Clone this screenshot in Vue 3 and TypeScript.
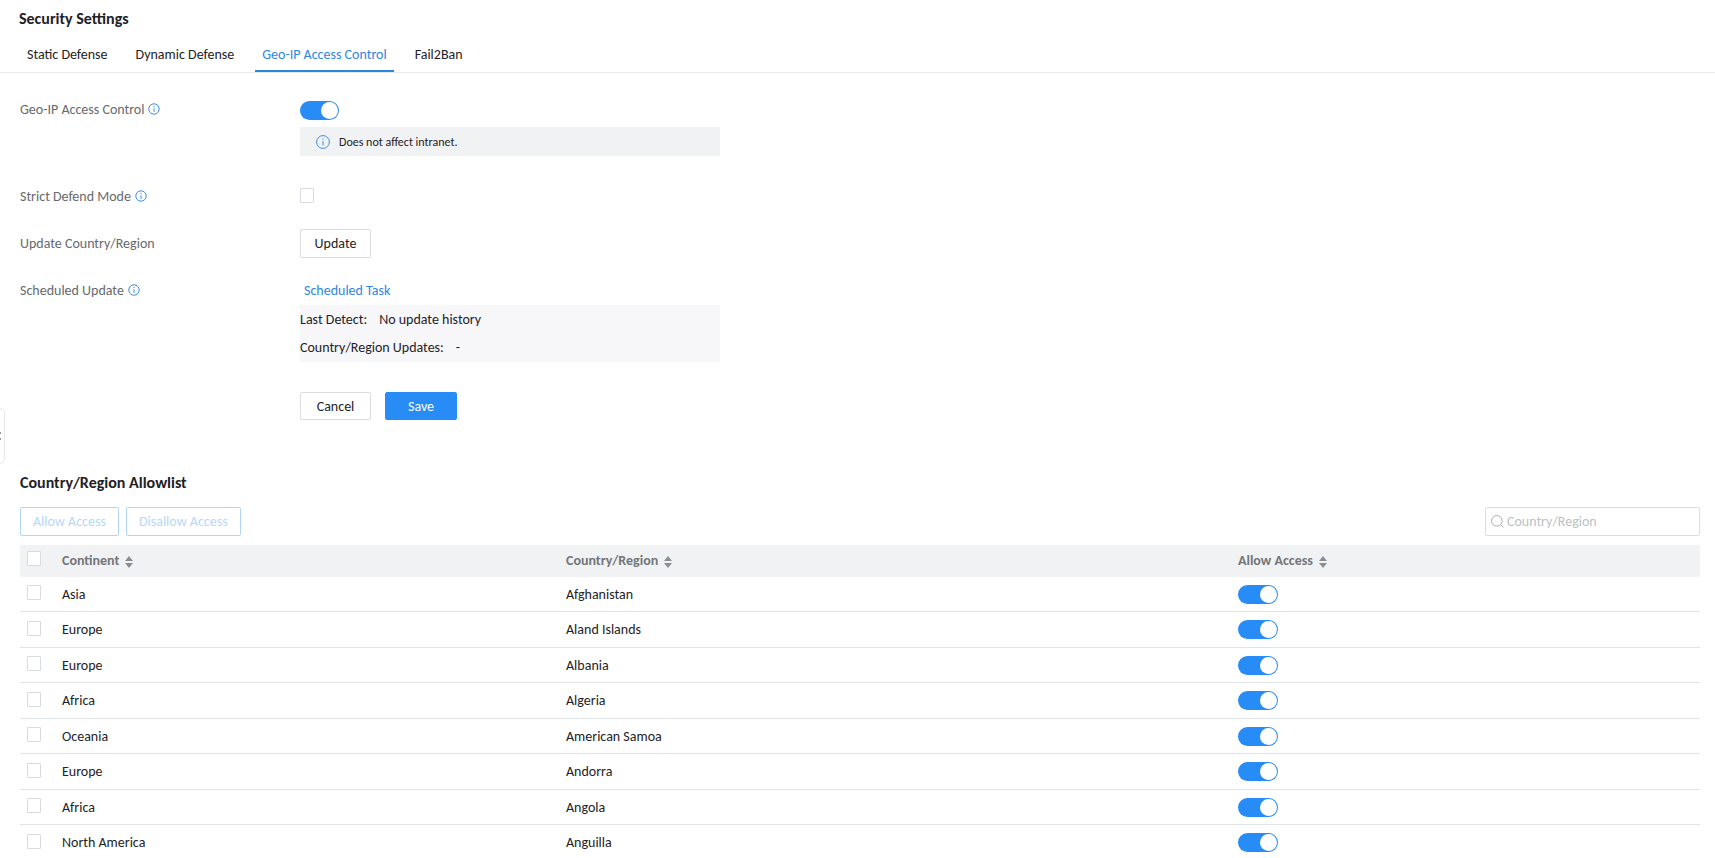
<script setup lang="ts">
import { computed, ref } from 'vue'

interface Region {
  continent: string
  name: string
  selected: boolean
  allowed: boolean
}

type SortKey = 'continent' | 'name' | 'allowed'

const tabs = ['Static Defense', 'Dynamic Defense', 'Geo-IP Access Control', 'Fail2Ban']
const activeTab = ref('Geo-IP Access Control')
const geoEnabled = ref(true)
const strictMode = ref(false)
const query = ref('')
const sortKey = ref<SortKey | null>(null)

const columns: { key: SortKey; label: string }[] = [
  { key: 'continent', label: 'Continent' },
  { key: 'name', label: 'Country/Region' },
  { key: 'allowed', label: 'Allow Access' },
]

const source: [string, string][] = [
  ['Asia', 'Afghanistan'],
  ['Europe', 'Aland Islands'],
  ['Europe', 'Albania'],
  ['Africa', 'Algeria'],
  ['Oceania', 'American Samoa'],
  ['Europe', 'Andorra'],
  ['Africa', 'Angola'],
  ['North America', 'Anguilla'],
]

const regions = ref<Region[]>(
  source.map(([continent, name]) => ({ continent, name, selected: false, allowed: true })),
)

const visible = computed(() => {
  const q = query.value.trim().toLowerCase()
  const list = regions.value.filter((r) => r.name.toLowerCase().includes(q))
  const key = sortKey.value
  return key ? [...list].sort((a, b) => String(a[key]).localeCompare(String(b[key]))) : list
})

const noneSelected = computed(() => !regions.value.some((r) => r.selected))
const allSelected = computed({
  get: () => regions.value.every((r) => r.selected),
  set: (on: boolean) => regions.value.forEach((r) => (r.selected = on)),
})

function setAccess(on: boolean) {
  regions.value.filter((r) => r.selected).forEach((r) => (r.allowed = on))
}
</script>

<template>
  <main class="page">
    <button class="drawer" type="button" aria-label="Expand sidebar">
      <svg class="drawer-icon" viewBox="0 0 8 10" aria-hidden="true"><path d="M6.5 1.5 3 5l3.5 3.5" /></svg>
    </button>

    <h1 class="title">Security Settings</h1>
    <nav class="tabs">
      <button
        v-for="tab in tabs"
        :key="tab"
        type="button"
        class="tab"
        :class="{ active: tab === activeTab }"
        @click="activeTab = tab"
      >{{ tab }}</button>
    </nav>

    <form class="form" @submit.prevent>
      <div class="row">
        <label class="label" for="geo">
          Geo-IP Access Control
          <svg class="info" viewBox="0 0 14 14" aria-hidden="true"><circle cx="7" cy="7" r="5.2" /><path d="M7 6.3v3.6M7 3.9v1.2" /></svg>
        </label>
        <div class="field">
          <input id="geo" v-model="geoEnabled" class="switch" type="checkbox" role="switch" />
          <p class="notice">
            <svg class="info" viewBox="0 0 14 14" aria-hidden="true"><circle cx="7" cy="7" r="6.4" /><path d="M7 6v4.4M7 3.4v1.3" /></svg>
            <span>Does not affect intranet.</span>
          </p>
        </div>
      </div>

      <div class="row strict">
        <label class="label" for="strict">
          Strict Defend Mode
          <svg class="info" viewBox="0 0 14 14" aria-hidden="true"><circle cx="7" cy="7" r="5.2" /><path d="M7 6.3v3.6M7 3.9v1.2" /></svg>
        </label>
        <div class="field"><input id="strict" v-model="strictMode" class="check" type="checkbox" /></div>
      </div>

      <div class="row update">
        <span id="update-label" class="label">Update Country/Region</span>
        <div class="field"><button class="btn" type="button" aria-describedby="update-label">Update</button></div>
      </div>

      <div class="row schedule">
        <span class="label">
          Scheduled Update
          <svg class="info" viewBox="0 0 14 14" aria-hidden="true"><circle cx="7" cy="7" r="5.2" /><path d="M7 6.3v3.6M7 3.9v1.2" /></svg>
        </span>
        <div class="field">
          <a class="link" href="#schedule">Scheduled Task</a>
          <dl class="status">
            <div class="status-line"><dt>Last Detect:</dt><dd>No update history</dd></div>
            <div class="status-line"><dt>Country/Region Updates:</dt><dd>-</dd></div>
          </dl>
        </div>
      </div>

      <div class="actions">
        <button class="btn" type="button">Cancel</button>
        <button class="btn primary" type="submit">Save</button>
      </div>
    </form>

    <section class="list">
      <h2 class="subtitle">Country/Region Allowlist</h2>
      <div class="toolbar">
        <button class="btn outline" type="button" :disabled="noneSelected" @click="setAccess(true)">Allow Access</button>
        <button class="btn outline" type="button" :disabled="noneSelected" @click="setAccess(false)">Disallow Access</button>
        <label class="search">
          <svg class="search-icon" viewBox="0 0 14 14" aria-hidden="true"><circle cx="6.3" cy="6.3" r="5.7" /><path d="m10.4 10.4 3 3" /></svg>
          <input v-model="query" class="search-input" type="text" placeholder="Country/Region" aria-label="Country/Region" />
        </label>
      </div>

      <table class="table">
        <colgroup>
          <col class="col-check" />
          <col class="col-continent" />
          <col class="col-name" />
          <col />
        </colgroup>
        <thead>
          <tr>
            <th><input v-model="allSelected" class="check" type="checkbox" aria-label="Select all" /></th>
            <th v-for="col in columns" :key="col.key" scope="col">
              <button class="sort" type="button" @click="sortKey = col.key">
                {{ col.label }}
                <svg class="sort-icon" viewBox="0 0 8 12" aria-hidden="true"><path d="M4 0 8 5H0ZM0 7h8l-4 5Z" /></svg>
              </button>
            </th>
          </tr>
        </thead>
        <tbody>
          <tr v-for="r in visible" :key="r.name">
            <td><input v-model="r.selected" class="check" type="checkbox" :aria-label="`Select ${r.name}`" /></td>
            <td>{{ r.continent }}</td>
            <td>{{ r.name }}</td>
            <td><input v-model="r.allowed" class="switch" type="checkbox" role="switch" :aria-label="`Allow ${r.name}`" /></td>
          </tr>
        </tbody>
      </table>
    </section>
  </main>
</template>

<style>
body {
  margin: 0;
  background: #fff;
}
</style>

<style scoped>
.page {
  position: relative;
  box-sizing: border-box;
  height: 100vh;
  overflow: hidden;
  font-family: Carlito, Lato, 'Liberation Sans', sans-serif;
  font-size: 14px;
  color: #1f2226;
}
.page * {
  box-sizing: border-box;
}
button,
input {
  margin: 0;
  font: inherit;
  color: inherit;
}
button {
  cursor: pointer;
}
.drawer {
  position: absolute;
  top: 408px;
  left: 0;
  width: 5px;
  height: 56px;
  padding: 0;
  overflow: hidden;
  border: 1px solid #e6e8eb;
  border-left: 0;
  border-radius: 0 5px 5px 0;
  background: #fff;
}
.drawer-icon {
  position: absolute;
  top: 22px;
  left: -6px;
  width: 8px;
  height: 10px;
  fill: none;
  stroke: #333;
  stroke-width: 1.5;
}
.title,
.subtitle {
  margin: 0;
  font-size: 16px;
  font-weight: 700;
}
.title {
  padding-left: 19px;
  line-height: 38px;
}
.tabs {
  display: flex;
  gap: 14px;
  padding-left: 20px;
  border-bottom: 1px solid #e6e8eb;
}
.tab {
  padding: 2px 7px 0;
  border: 0;
  border-bottom: 2px solid transparent;
  background: none;
  line-height: 30px;
}
.tab.active {
  border-color: #2f86e0;
  color: #2f86e0;
}
.form {
  padding: 28px 20px 0;
}
.row {
  display: grid;
  grid-template-columns: 280px 1fr;
}
.label {
  display: flex;
  align-items: center;
  gap: 3px;
  height: 16px;
  color: #66696d;
}
.info {
  width: 14px;
  height: 14px;
  fill: none;
  stroke: #3a8ee6;
}
.field {
  display: flex;
  flex-direction: column;
  align-items: flex-start;
}
.switch {
  appearance: none;
  display: block;
  width: 39px;
  height: 19px;
  padding: 1px;
  border-radius: 10px;
  background: #c4c9cf;
}
.switch::before {
  content: '';
  display: block;
  width: 17px;
  height: 17px;
  border-radius: 50%;
  background: #fff;
}
.switch:checked {
  background: #288cf6;
}
.switch:checked::before {
  margin-left: auto;
}
.check {
  appearance: none;
  display: block;
  width: 14px;
  height: 15px;
  border: 1px solid #d7dbdf;
  border-radius: 1px;
  background: #fff;
}
.check:checked {
  border-color: #288cf6;
  background: #288cf6;
}
.notice {
  display: flex;
  align-items: center;
  gap: 9px;
  width: 420px;
  max-width: 100%;
  height: 29px;
  margin: 7px 0 0;
  padding: 0 16px;
  background: #f1f2f4;
  font-size: 12px;
}
.strict {
  margin-top: 32px;
}
.update {
  align-items: center;
  margin-top: 25px;
}
.schedule {
  margin-top: 24px;
}
.btn {
  min-width: 71px;
  height: 29px;
  padding: 0 12px;
  border: 1px solid #dadde1;
  border-radius: 2px;
  background: #fff;
}
.btn.primary {
  min-width: 72px;
  border-color: #288cf6;
  background: #288cf6;
  color: #fff;
}
.btn.outline {
  border-color: #288cf6;
  color: #288cf6;
}
.btn.outline:disabled {
  border-color: #b3d5f8;
  color: #b5d7fb;
  cursor: default;
}
.link {
  padding-left: 4px;
  line-height: 18px;
  color: #2f86e0;
  text-decoration: none;
}
.status {
  width: 420px;
  max-width: 100%;
  margin: 5px 0 0;
  padding-top: 1px;
  background: #f7f7fa;
  line-height: 28px;
}
.status-line {
  display: flex;
  gap: 12px;
}
.status-line dd {
  margin: 0;
}
.actions {
  display: flex;
  gap: 14px;
  margin: 30px 0 0 280px;
}
.actions .btn {
  height: 28px;
}
.list {
  padding: 51px 15px 0 20px;
}
.subtitle {
  line-height: 24px;
}
.toolbar {
  display: flex;
  gap: 7px;
  margin: 12px 0 9px;
}
.search {
  display: flex;
  align-items: center;
  gap: 3px;
  width: 215px;
  height: 29px;
  margin-left: auto;
  padding: 0 5px;
  border: 1px solid #dadde1;
  border-radius: 2px;
}
.search-icon {
  flex: none;
  width: 13px;
  height: 13px;
  fill: none;
  stroke: #a4a7ab;
}
.search-input {
  flex: 1;
  min-width: 0;
  padding: 0;
  border: 0;
  outline: 0;
  background: none;
}
.search-input::placeholder {
  color: #bcbfc3;
  opacity: 1;
}
.table {
  width: 100%;
  table-layout: fixed;
  border-collapse: separate;
  border-spacing: 0;
}
.col-check {
  width: 35px;
}
.col-continent {
  width: 30%;
}
.col-name {
  width: 40%;
}
.table th {
  height: 32px;
  padding: 0 7px 2px;
  background: #f1f2f4;
  text-align: left;
}
.table td {
  height: 36px;
  padding: 0 7px;
  border-bottom: 1px solid #e1e5e9;
}
.table tr:nth-child(odd) td {
  height: 35px;
}
.table .check {
  margin-bottom: 3px;
}
.table .switch {
  width: 40px;
}
.sort {
  display: flex;
  align-items: center;
  gap: 6px;
  padding: 0;
  border: 0;
  background: none;
  font-weight: 700;
  color: #73767a;
}
.sort-icon {
  width: 8px;
  height: 12px;
  margin-top: 4px;
  fill: #8b8e92;
}
</style>
